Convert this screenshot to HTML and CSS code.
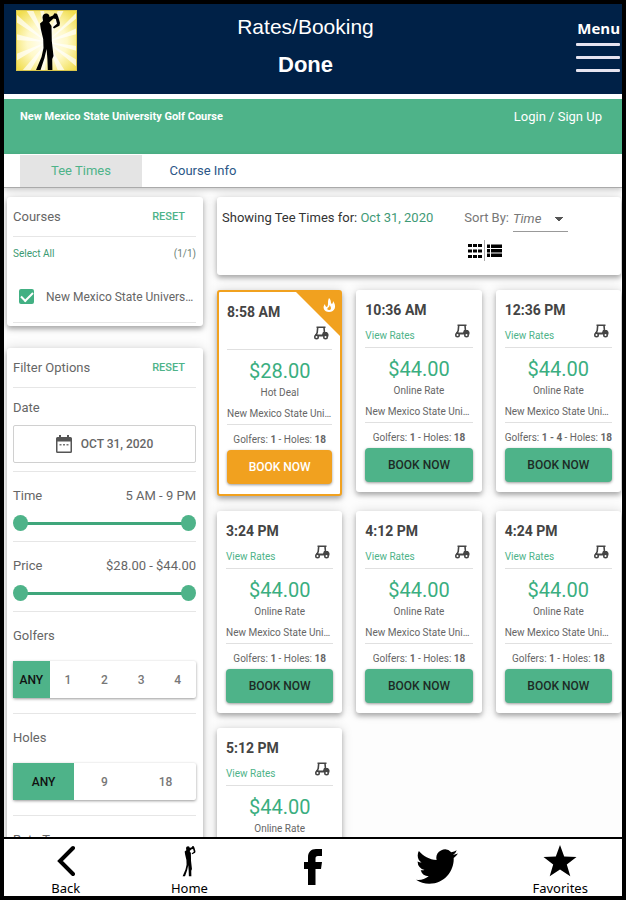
FILE: index.html
```html
<!DOCTYPE html>
<html lang="en">
<head>
    <meta charset="UTF-8">
    <meta name="viewport" content="width=device-width, initial-scale=1.0">
    <title>Rates/Booking</title>
    <link rel="stylesheet" href="styles.css">
</head>
<body>
    <!-- Shared icons -->
    <svg class="sprite" aria-hidden="true">
        <symbol id="golfer" viewBox="0 0 26 58">
            <path d="M7.500 5.500C7.500 3 9.200 1.500 11.300 1.500C13.300 1.500 14.500 3 14.500 5L18 3.500L19.500 1.200L22 1.800L23.300 5L25 11L24.400 13.700L19 16.500L17.800 15.200L22 11.700L20.800 7L18.500 6.500L14.200 10.500L16.500 14L16.800 29L18.500 44L17.200 47L17.400 58H12.800L12.400 47L11.600 37L9.500 46L5.500 58H1L6.500 45L8.500 36L8.200 27L5.800 17L5 11.500L8 9Z"/>
        </symbol>
        <symbol id="cart" viewBox="0 0 16 14">
            <path fill="none" stroke="#444" stroke-width="1.600" d="M3.500 1.200H12.500M4.700 1.500L4.200 6.500L2.500 10M11 1.500L11.500 7"/>
            <path d="M5 8.500H9L10 6H14L15.500 8V10.500H1.500L2.500 8Z"/>
            <circle cx="3.500" cy="11" r="2.500"/>
            <circle cx="12.500" cy="11" r="2.500"/>
            <circle cx="3.500" cy="11" r="1" fill="#fff"/>
            <circle cx="12.500" cy="11" r="1" fill="#fff"/>
        </symbol>
    </svg>

    <div class="app">
        <header class="app-header">
            <svg class="logo" viewBox="0 0 61 61" role="img" aria-label="Golfer">
                <defs>
                    <radialGradient id="glow">
                        <stop offset="0" stop-color="#fff"/>
                        <stop offset=".5" stop-color="#fff9c8"/>
                        <stop offset="1" stop-color="#f0dc4a"/>
                    </radialGradient>
                </defs>
                <rect width="61" height="61" fill="#f3e14f"/>
                <circle cx="31" cy="32" r="40" fill="url(#glow)"/>
                <path fill="#fff" opacity=".7" d="M31 32L0 4V12ZM31 32L0 24V30ZM31 32L0 44V51ZM31 32L6 61H14ZM31 32L24 61H29ZM31 32L42 61H49ZM31 32L61 50V57ZM31 32L61 36V41ZM31 32L61 18V24ZM31 32L61 2V8ZM31 32L42 0H48ZM31 32L10 0H17ZM31 32L24 0H28Z"/>
                <rect x=".5" y=".5" width="60" height="60" fill="none" stroke="#d9c64c"/>
                <use href="#golfer" x="19" y="2" width="26" height="58"/>
            </svg>
            <div class="titles">
                <h1>Rates/Booking</h1>
                <button class="done" type="button">Done</button>
            </div>
            <button class="menu" type="button">
                <span>Menu</span>
                <i></i><i></i><i></i>
            </button>
        </header>

        <div class="course-bar">
            <strong>New Mexico State University Golf Course</strong>
            <a href="#login">Login / Sign Up</a>
        </div>

        <nav class="tabs">
            <a class="tab active" href="#tee-times">Tee Times</a>
            <a class="tab" href="#course-info">Course Info</a>
        </nav>

        <div class="content">
            <aside class="sidebar">
                <section class="panel courses">
                    <div class="panel-head">
                        <h2>Courses</h2>
                        <button type="button">RESET</button>
                    </div>
                    <div class="select-all">
                        <a href="#all">Select All</a>
                        <span>(1/1)</span>
                    </div>
                    <label class="course-option">
                        <input type="checkbox" checked>
                        <span>New Mexico State University</span>
                    </label>
                </section>

                <section class="panel filters">
                    <div class="panel-head">
                        <h2>Filter Options</h2>
                        <button type="button">RESET</button>
                    </div>
                    <div class="filter date-filter">
                        <h3>Date</h3>
                        <button class="date-button" type="button">
                            <svg width="16" height="18" viewBox="0 0 16 18" aria-hidden="true">
                                <path fill="#555" fill-rule="evenodd" d="M3 0H5V2H11V0H13V2H14.500Q16 2 16 3.500V16.500Q16 18 14.500 18H1.500Q0 18 0 16.500V3.500Q0 2 1.500 2H3ZM1.500 6.500V16.500H14.500V6.500Z"/>
                                <path fill="#777" d="M3.500 9H5.500V10.500H3.500ZM7 9H9V10.500H7ZM10.500 9H12.500V10.500H10.500Z"/>
                            </svg>
                            OCT 31, 2020
                        </button>
                    </div>
                    <div class="filter">
                        <div class="filter-row"><h3>Time</h3><output>5 AM - 9 PM</output></div>
                        <div class="range">
                            <input type="range" min="5" max="21" value="5" aria-label="Earliest time">
                            <input type="range" min="5" max="21" value="21" aria-label="Latest time">
                        </div>
                    </div>
                    <div class="filter">
                        <div class="filter-row"><h3>Price</h3><output>$28.00 - $44.00</output></div>
                        <div class="range">
                            <input type="range" min="28" max="44" value="28" aria-label="Lowest price">
                            <input type="range" min="28" max="44" value="44" aria-label="Highest price">
                        </div>
                    </div>
                    <div class="filter">
                        <h3>Golfers</h3>
                        <div class="segments">
                            <label><input type="radio" name="golfers" checked>ANY</label>
                            <label><input type="radio" name="golfers">1</label>
                            <label><input type="radio" name="golfers">2</label>
                            <label><input type="radio" name="golfers">3</label>
                            <label><input type="radio" name="golfers">4</label>
                        </div>
                    </div>
                    <div class="filter">
                        <h3>Holes</h3>
                        <div class="segments">
                            <label><input type="radio" name="holes" checked>ANY</label>
                            <label><input type="radio" name="holes">9</label>
                            <label><input type="radio" name="holes">18</label>
                        </div>
                    </div>
                    <div class="filter">
                        <h3>Rate Type</h3>
                    </div>
                </section>
            </aside>

            <main class="results">
                <div class="toolbar">
                    <p>Showing Tee Times for: <span>Oct 31, 2020</span></p>
                    <div class="tools">
                        <div class="sort">
                            <label for="sort">Sort By:</label>
                            <select id="sort">
                                <option>Time</option>
                                <option>Price</option>
                            </select>
                        </div>
                        <div class="views">
                            <button type="button" aria-label="Grid view">
                                <svg width="14" height="16" viewBox="0 0 14 16"><path d="M0 1H4V4H0ZM5 1H9V4H5ZM10 1H14V4H10ZM0 6.500H4V9.500H0ZM5 6.500H9V9.500H5ZM10 6.500H14V9.500H10ZM0 12H4V15H0ZM5 12H9V15H5ZM10 12H14V15H10Z"/></svg>
                            </button>
                            <button type="button" aria-label="List view">
                                <svg width="15" height="16" viewBox="0 0 15 16"><path d="M0 1.500H3V5H0ZM4 1.500H15V5H4ZM0 6H3V9.500H0ZM4 6H15V9.500H4ZM0 10.500H3V14H0ZM4 10.500H15V14H4Z"/></svg>
                            </button>
                        </div>
                    </div>
                </div>

                <div class="tee-grid">
                    <article class="tee hot">
                        <svg class="ribbon" width="44" height="44" viewBox="0 0 44 44" aria-hidden="true">
                            <path fill="#f1a11f" d="M0 0H44V44Z"/>
                            <path fill="#fff" d="M33 6C36 9 34 11 36 12C37 11 37 10 37 9C41 14 39 20 33 20C28 20 26 15 29 12C29 14 30 15 31 15C33 12 31 10 33 6Z"/>
                            <path fill="#f1a11f" d="M33.500 13C36 16 35 18 33 18C31 18 31 16.500 32 15.500C33 15.500 33.500 14.500 33.500 13Z"/>
                        </svg>
                        <h4>8:58 AM</h4>
                        <div class="rates"><svg class="cart"><use href="#cart"/></svg></div>
                        <p class="price">$28.00</p>
                        <p class="rate-name">Hot Deal</p>
                        <p class="course">New Mexico State University</p>
                        <p class="info">Golfers: <b>1</b> - Holes: <b>18</b></p>
                        <button class="book" type="button">BOOK NOW</button>
                    </article>
                    <article class="tee">
                        <h4>10:36 AM</h4>
                        <div class="rates"><a href="#rates">View Rates</a><svg class="cart"><use href="#cart"/></svg></div>
                        <p class="price">$44.00</p>
                        <p class="rate-name">Online Rate</p>
                        <p class="course">New Mexico State University</p>
                        <p class="info">Golfers: <b>1</b> - Holes: <b>18</b></p>
                        <button class="book" type="button">BOOK NOW</button>
                    </article>
                    <article class="tee">
                        <h4>12:36 PM</h4>
                        <div class="rates"><a href="#rates">View Rates</a><svg class="cart"><use href="#cart"/></svg></div>
                        <p class="price">$44.00</p>
                        <p class="rate-name">Online Rate</p>
                        <p class="course">New Mexico State University</p>
                        <p class="info">Golfers: <b>1 - 4</b> - Holes: <b>18</b></p>
                        <button class="book" type="button">BOOK NOW</button>
                    </article>
                    <article class="tee">
                        <h4>3:24 PM</h4>
                        <div class="rates"><a href="#rates">View Rates</a><svg class="cart"><use href="#cart"/></svg></div>
                        <p class="price">$44.00</p>
                        <p class="rate-name">Online Rate</p>
                        <p class="course">New Mexico State University</p>
                        <p class="info">Golfers: <b>1</b> - Holes: <b>18</b></p>
                        <button class="book" type="button">BOOK NOW</button>
                    </article>
                    <article class="tee">
                        <h4>4:12 PM</h4>
                        <div class="rates"><a href="#rates">View Rates</a><svg class="cart"><use href="#cart"/></svg></div>
                        <p class="price">$44.00</p>
                        <p class="rate-name">Online Rate</p>
                        <p class="course">New Mexico State University</p>
                        <p class="info">Golfers: <b>1</b> - Holes: <b>18</b></p>
                        <button class="book" type="button">BOOK NOW</button>
                    </article>
                    <article class="tee">
                        <h4>4:24 PM</h4>
                        <div class="rates"><a href="#rates">View Rates</a><svg class="cart"><use href="#cart"/></svg></div>
                        <p class="price">$44.00</p>
                        <p class="rate-name">Online Rate</p>
                        <p class="course">New Mexico State University</p>
                        <p class="info">Golfers: <b>1</b> - Holes: <b>18</b></p>
                        <button class="book" type="button">BOOK NOW</button>
                    </article>
                    <article class="tee">
                        <h4>5:12 PM</h4>
                        <div class="rates"><a href="#rates">View Rates</a><svg class="cart"><use href="#cart"/></svg></div>
                        <p class="price">$44.00</p>
                        <p class="rate-name">Online Rate</p>
                    </article>
                </div>
            </main>
        </div>

        <footer class="app-footer">
            <a href="#back">
                <svg width="18" height="32" viewBox="0 0 18 32"><path fill="none" stroke="#000" stroke-width="4" stroke-linecap="round" d="M16 3L3 16L16 29"/></svg>
                Back
            </a>
            <a href="#home">
                <svg width="14" height="32" viewBox="0 0 26 58"><use href="#golfer"/></svg>
                Home
            </a>
            <a class="social" href="#facebook" aria-label="Facebook">
                <svg width="18" height="36" viewBox="0 0 18 36"><path d="M4 36V20H0V13H4V8.500C4 3 7 0 12 0H18V7H14C12 7 11.500 8 11.500 9.500V13H18L17 20H11.500V36Z"/></svg>
            </a>
            <a class="social" href="#twitter" aria-label="Twitter">
                <svg width="42" height="36" viewBox="0 2.500 24 19.500"><path d="M23.950 4.570a10 10 0 0 1-2.820.77 4.960 4.960 0 0 0 2.160-2.720c-.950.550-2 .950-3.130 1.180a4.920 4.920 0 0 0-8.380 4.480C7.690 8.090 4.070 6.130 1.640 3.160a4.820 4.820 0 0 0-.670 2.480c0 1.710.870 3.210 2.190 4.100a4.900 4.900 0 0 1-2.230-.620v.060a4.920 4.920 0 0 0 3.950 4.830 5 5 0 0 1-2.210.080 4.940 4.940 0 0 0 4.600 3.420A9.870 9.870 0 0 1 0 19.540a14 14 0 0 0 7.550 2.210c9.050 0 14-7.500 14-13.980 0-.210 0-.420-.020-.630a9.940 9.940 0 0 0 2.460-2.550z"/></svg>
            </a>
            <a href="#favorites">
                <svg width="34" height="32" viewBox="0 0 34 32"><path d="M17 0L21.200 11.500L33.500 11.900L23.800 19.400L27.300 31.200L17 24.400L6.700 31.200L10.200 19.400L.5 11.900L12.800 11.500Z"/></svg>
                Favorites
            </a>
        </footer>
    </div>
</body>
</html>
```

FILE: styles.css
```css
* {
    box-sizing: border-box;
}
body {
    margin: 0;
    font-family: Roboto, Arial, sans-serif;
    font-size: 13px;
    color: #666;
}
h1, h2, h3, h4, p {
    margin: 0;
    font-weight: 400;
}
a {
    color: inherit;
    text-decoration: none;
}
button {
    margin: 0;
    padding: 0;
    border: none;
    background: none;
    color: inherit;
    font-family: inherit;
    cursor: pointer;
}
.sprite {
    display: none;
}
.app {
    display: flex;
    flex-direction: column;
    height: 100vh;
    border: 4px solid #000;
    background-color: #fdfdfd;
}

/* Header */
.app-header {
    display: flex;
    align-items: flex-start;
    height: 90px;
    flex-shrink: 0;
    padding: 6px 2px 0 12px;
    background-color: #002147;
    color: #fff;
}
.logo {
    width: 61px;
    height: 61px;
}
.titles {
    display: flex;
    flex: 1;
    flex-direction: column;
    align-items: center;
    padding-top: 4px;
    gap: 12px;
    font-family: "Liberation Sans", Arial, sans-serif;
}
.titles h1 {
    font-size: 21px;
    line-height: 26px;
}
.done {
    font-size: 22px;
    font-weight: 700;
    line-height: 26px;
}
.menu {
    display: flex;
    flex-direction: column;
    align-items: flex-end;
    width: 86px;
    padding-top: 8px;
    gap: 10px;
    font-family: "Open Sans", sans-serif;
    font-size: 15px;
    font-weight: 700;
    line-height: 20px;
}
.menu span {
    margin-bottom: -5px;
}
.menu i {
    width: 44px;
    height: 3px;
    border-radius: 1px;
    background-color: #e6e4f0;
}

/* Course name bar */
.course-bar {
    display: flex;
    justify-content: space-between;
    height: 60px;
    flex-shrink: 0;
    padding: 10px 20px 0 16px;
    border-top: 5px solid #fff;
    background-color: #4eb389;
    color: #fff;
    line-height: 16px;
}
.course-bar strong {
    font-size: 11px;
    font-weight: 700;
}
.course-bar a {
    font-size: 13px;
}

/* Tabs */
.tabs {
    display: flex;
    flex-shrink: 0;
    padding: 1px 16px 0;
    border-bottom: 1px solid #aaa;
    background-color: #fff;
    box-shadow: 0 2px 5px rgba(0, 0, 0, 0.2);
}
.tab {
    width: 122px;
    line-height: 32px;
    text-align: center;
    font-size: 13px;
    color: #2c5687;
}
.tab.active {
    background-color: #e4e4e4;
    color: #4eb389;
}

/* Content columns */
.content {
    display: grid;
    grid-template-columns: 196px 1fr;
    flex: 1;
    gap: 14px;
    min-height: 0;
    padding: 9px 1px 0 3px;
    overflow: hidden;
}
.panel, .toolbar, .tee {
    border-radius: 3px;
    background-color: #fff;
    box-shadow: 0 3px 5px rgba(0, 0, 0, 0.28), 0 0 12px rgba(0, 0, 0, 0.14);
}

/* Sidebar */
.sidebar {
    min-width: 0;
}
.panel {
    padding: 0 7px 0 6px;
}
.courses {
    height: 129px;
    margin-bottom: 22px;
}
.panel-head {
    display: flex;
    align-items: center;
    justify-content: space-between;
    height: 40px;
    padding-right: 11px;
    border-bottom: 1px solid #e6e6e6;
}
.panel-head h2 {
    font-size: 13px;
}
.panel-head button {
    font-size: 11px;
    font-weight: 500;
    color: #4eb389;
}
.select-all {
    display: flex;
    justify-content: space-between;
    padding: 8px 0;
    font-size: 10px;
    line-height: 18px;
    color: #3b9a72;
}
.select-all span {
    color: #6b7f76;
}
.course-option {
    display: flex;
    align-items: center;
    gap: 12px;
    height: 52px;
    padding-left: 6px;
    border-bottom: 1px solid #e6e6e6;
    font-size: 12px;
}
.course-option span {
    overflow: hidden;
    text-overflow: ellipsis;
    white-space: nowrap;
}
.course-option input {
    display: grid;
    place-items: center;
    appearance: none;
    width: 15px;
    height: 15px;
    flex-shrink: 0;
    margin: 0;
    border: 2px solid #42b083;
    border-radius: 2px;
}
.course-option input:checked {
    background-color: #42b083;
}
.course-option input:checked::after {
    content: "";
    width: 10px;
    height: 5px;
    margin-bottom: 3px;
    border: solid #fff;
    border-width: 0 0 2px 2px;
    transform: rotate(-45deg);
}
.filter {
    padding: 16px 0 8px;
    border-bottom: 1px solid #e6e6e6;
}
.filter h3 {
    font-size: 13px;
    line-height: 16px;
}
.date-filter {
    padding: 12px 0 8px;
}
.date-button {
    display: flex;
    align-items: center;
    justify-content: center;
    gap: 9px;
    width: 100%;
    height: 38px;
    margin-top: 9px;
    border: 1px solid #d0d0d0;
    border-radius: 2px;
    font-size: 12px;
    font-weight: 500;
}
.filter-row {
    display: flex;
    justify-content: space-between;
    line-height: 16px;
}

/* Two thumbs share one track */
.range {
    display: grid;
    height: 16px;
    margin-top: 11px;
    margin-bottom: 2px;
    background: linear-gradient(#3fa67b, #3fa67b) center / 90% 3px no-repeat;
}
.range input {
    grid-area: 1 / 1;
    appearance: none;
    width: 100%;
    min-width: 0;
    height: 16px;
    margin: 0;
    background: none;
    pointer-events: none;
}
.range input::-webkit-slider-thumb {
    appearance: none;
    width: 15px;
    height: 16px;
    border: none;
    border-radius: 50%;
    background-color: #4eb389;
    pointer-events: auto;
}
.segments {
    display: flex;
    height: 37px;
    margin: 17px 0 7px;
    border-radius: 2px;
    background-color: #fff;
    box-shadow: 0 1px 3px rgba(0, 0, 0, 0.4);
}
.segments label {
    display: flex;
    align-items: center;
    justify-content: center;
    flex: 1 0 0;
    font-size: 12px;
    font-weight: 500;
    color: #777;
}
.segments label:has(:checked) {
    background-color: #4eb389;
    color: #111;
}
.segments input {
    appearance: none;
    width: 0;
    height: 0;
    margin: 0;
}

/* Results toolbar */
.results {
    min-width: 0;
}
.toolbar {
    display: flex;
    gap: 31px;
    height: 78px;
    margin-bottom: 15px;
    padding: 8px 5px 0;
    line-height: 26px;
    white-space: nowrap;
    color: #333;
}
.toolbar p span {
    color: #3f9a76;
}
.tools {
    color: #777;
}
.sort {
    display: flex;
    gap: 4px;
}
.sort select {
    appearance: none;
    width: 55px;
    height: 27px;
    padding: 0;
    border: none;
    border-bottom: 1px solid #999;
    border-radius: 0;
    background: conic-gradient(from -45deg at 50% 100%, #555 90deg, transparent 0) 42px 12px / 8px 4px no-repeat;
    background: conic-gradient(from -45deg at 50% 100%, #555 90deg, transparent 0) 42px 12px / 8px 4px no-repeat;
    color: inherit;
    font-family: inherit;
    font-size: 13px;
    font-style: italic;
}
.views {
    display: flex;
    padding: 8px 4px;
}
.views button {
    display: flex;
    align-items: center;
    height: 21px;
}
.views button + button {
    margin-left: 2px;
    padding-left: 2px;
    border-left: 1px solid #aaa;
}

/* Tee time cards */
.tee-grid {
    display: grid;
    grid-template-columns: repeat(3, 1fr);
    align-items: start;
    gap: 15px 14px;
}
.tee {
    position: relative;
    min-width: 0;
    padding: 12px 9px 10px;
    text-align: center;
    font-size: 10px;
    line-height: 12px;
    color: #666;
}
.tee.hot {
    padding: 12px 8px 10px;
    border: 2px solid #f1a11f;
}
.ribbon {
    position: absolute;
    top: 0;
    right: 0;
}
.tee h4 {
    text-align: left;
    font-size: 14px;
    font-weight: 700;
    line-height: 16px;
    color: #444;
}
.rates {
    display: flex;
    align-items: flex-end;
    height: 30px;
    padding: 6px 3px 5px 0;
    border-bottom: 1px solid #e0e0e0;
    color: #4eb389;
}
.cart {
    align-self: flex-start;
    width: 16px;
    height: 14px;
    margin-left: auto;
    fill: #444;
}
.price {
    margin: 8px 0 3px;
    font-size: 20px;
    line-height: 26px;
    color: #3aae80;
}
.course {
    margin: 9px 0;
    padding-bottom: 4px;
    border-bottom: 1px solid #e0e0e0;
    overflow: hidden;
    text-overflow: ellipsis;
    white-space: nowrap;
}
.info {
    white-space: nowrap;
}
.book {
    width: 100%;
    height: 34px;
    margin-top: 4px;
    border-radius: 4px;
    background-color: #4eb389;
    box-shadow: 0 1px 3px rgba(0, 0, 0, 0.4);
    font-size: 12px;
    font-weight: 500;
    color: #1d2b25;
}
.hot .book {
    background-color: #f1a11f;
    color: #fff;
}

/* Bottom navigation */
.app-footer {
    display: grid;
    grid-template-columns: repeat(5, 1fr);
    height: 59px;
    flex-shrink: 0;
    border-top: 2px solid #000;
    background-color: #fff;
    font-family: "Noto Sans", sans-serif;
    font-size: 13px;
    line-height: 16px;
    color: #000;
}
.app-footer a {
    display: flex;
    flex-direction: column;
    align-items: center;
    padding-top: 6px;
    gap: 3px;
}
.app-footer .social {
    padding-top: 10px;
}
```
